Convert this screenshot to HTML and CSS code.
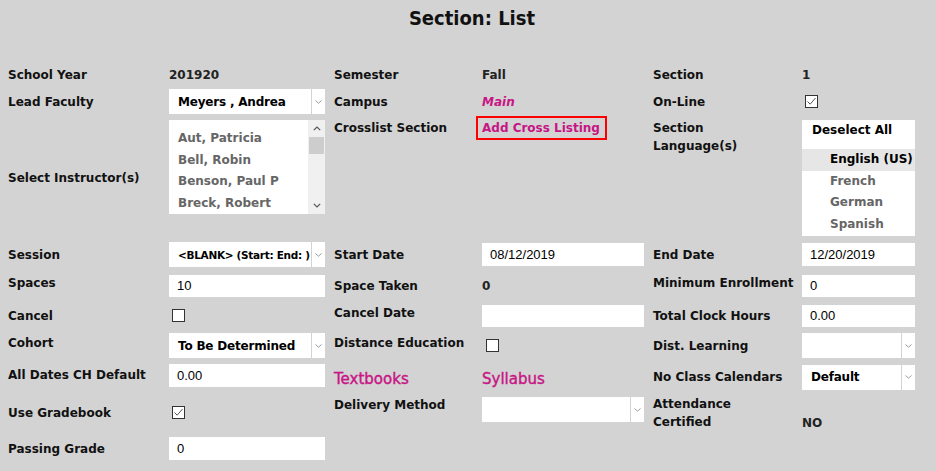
FILE: index.html
```html
<!DOCTYPE html>
<html>
<head>
<meta charset="utf-8">
<title>Section: List</title>
<link rel="stylesheet" href="styles.css">
</head>
<body>
<div class="page">
  <header class="title-bar"><h1 class="title">Section: List</h1></header>
  <div class="form">
    <!-- Row 1 -->
    <div class="lbl">School Year</div>
    <div class="val">201920</div>
    <div class="lbl mid">Semester</div>
    <div class="val">Fall</div>
    <div class="lbl mid">Section</div>
    <div class="val">1</div>

    <!-- Row 2 -->
    <div class="lbl">Lead Faculty</div>
    <div class="select"><span class="sel-text">Meyers , Andrea</span><span class="sel-btn"><svg width="7" height="4" viewBox="0 0 7 4"><path d="M0.5 0.5 L3.5 3.2 L6.5 0.5" fill="none" stroke="#9a9a9a" stroke-width="1"/></svg></span></div>
    <div class="lbl mid">Campus</div>
    <div class="val link italic">Main</div>
    <div class="lbl mid">On-Line</div>
    <div class="cell-check"><span class="check on"><svg width="11" height="11" viewBox="0 0 11 11"><path d="M1.5 5.5 L4.2 8.2 L9.5 2" fill="none" stroke="#555" stroke-width="1"/></svg></span></div>

    <!-- Row 3 -->
    <div class="lbl">Select Instructor(s)</div>
    <div class="listbox">
      <div class="list-items">
        <div class="item">Aut, Patricia</div>
        <div class="item">Bell, Robin</div>
        <div class="item">Benson, Paul P</div>
        <div class="item">Breck, Robert</div>
      </div>
      <div class="scrollbar">
        <span class="sb-arrow"><svg width="8" height="5" viewBox="0 0 8 5"><path d="M0.8 4.2 L4 1 L7.2 4.2" fill="none" stroke="#555" stroke-width="1.2"/></svg></span>
        <span class="sb-thumb"></span>
        <span class="sb-fill"></span>
        <span class="sb-arrow"><svg width="8" height="5" viewBox="0 0 8 5"><path d="M0.8 0.8 L4 4 L7.2 0.8" fill="none" stroke="#555" stroke-width="1.2"/></svg></span>
      </div>
    </div>
    <div class="lbl mid top">Crosslist Section</div>
    <div class="top-cell"><a class="cross-link" href="#">Add Cross Listing</a></div>
    <div class="lbl mid top two">Section<br>Language(s)</div>
    <div class="langbox">
      <div class="deselect">Deselect All</div>
      <div class="lang selected">English (US)</div>
      <div class="lang">French</div>
      <div class="lang">German</div>
      <div class="lang">Spanish</div>
    </div>

    <!-- Row 4 -->
    <div class="lbl">Session</div>
    <div class="select"><span class="sel-text tight">&lt;BLANK&gt; (Start: End: )</span><span class="sel-btn"><svg width="7" height="4" viewBox="0 0 7 4"><path d="M0.5 0.5 L3.5 3.2 L6.5 0.5" fill="none" stroke="#9a9a9a" stroke-width="1"/></svg></span></div>
    <div class="lbl mid">Start Date</div>
    <input class="field" type="text" value="08/12/2019">
    <div class="lbl mid">End Date</div>
    <input class="field" type="text" value="12/20/2019">

    <!-- Row 5 -->
    <div class="lbl up">Spaces</div>
    <input class="field short" type="text" value="10">
    <div class="lbl mid">Space Taken</div>
    <div class="val">0</div>
    <div class="lbl mid up">Minimum Enrollment</div>
    <input class="field short" type="text" value="0">

    <!-- Row 6 -->
    <div class="lbl">Cancel</div>
    <div class="cell-check"><span class="check"></span></div>
    <div class="lbl mid up">Cancel Date</div>
    <input class="field short" type="text" value="">
    <div class="lbl mid">Total Clock Hours</div>
    <input class="field short" type="text" value="0.00">

    <!-- Row 7 -->
    <div class="lbl up">Cohort</div>
    <div class="select"><span class="sel-text">To Be Determined</span><span class="sel-btn"><svg width="7" height="4" viewBox="0 0 7 4"><path d="M0.5 0.5 L3.5 3.2 L6.5 0.5" fill="none" stroke="#9a9a9a" stroke-width="1"/></svg></span></div>
    <div class="lbl mid up">Distance Education</div>
    <div class="cell-check"><span class="check de"></span></div>
    <div class="lbl mid">Dist. Learning</div>
    <div class="select"><span class="sel-text"></span><span class="sel-btn"><svg width="7" height="4" viewBox="0 0 7 4"><path d="M0.5 0.5 L3.5 3.2 L6.5 0.5" fill="none" stroke="#9a9a9a" stroke-width="1"/></svg></span></div>

    <!-- Row 8 -->
    <div class="lbl up">All Dates CH Default</div>
    <input class="field early" type="text" value="0.00">
    <div class="lbl mid big link">Textbooks</div>
    <div class="val big link">Syllabus</div>
    <div class="lbl mid">No Class Calendars</div>
    <div class="select"><span class="sel-text">Default</span><span class="sel-btn"><svg width="7" height="4" viewBox="0 0 7 4"><path d="M0.5 0.5 L3.5 3.2 L6.5 0.5" fill="none" stroke="#9a9a9a" stroke-width="1"/></svg></span></div>

    <!-- Row 9 -->
    <div class="lbl">Use Gradebook</div>
    <div class="cell-check"><span class="check on"><svg width="11" height="11" viewBox="0 0 11 11"><path d="M1.5 5.5 L4.2 8.2 L9.5 2" fill="none" stroke="#555" stroke-width="1"/></svg></span></div>
    <div class="lbl mid top dm">Delivery Method</div>
    <div class="select top dm-sel"><span class="sel-text"></span><span class="sel-btn"><svg width="7" height="4" viewBox="0 0 7 4"><path d="M0.5 0.5 L3.5 3.2 L6.5 0.5" fill="none" stroke="#9a9a9a" stroke-width="1"/></svg></span></div>
    <div class="lbl mid two">Attendance<br>Certified</div>
    <div class="val bottom">NO</div>

    <!-- Row 10 -->
    <div class="lbl">Passing Grade</div>
    <input class="field" type="text" value="0">
    <div></div><div></div><div></div><div></div>
  </div>
</div>
</body>
</html>
```
FILE: styles.css
```css
html, body {
  margin: 0;
  padding: 0;
  background: #d3d3d3;
}
.page {
  width: 936px;
  height: 471px;
  padding: 0 8px;
  box-sizing: border-box;
  font-family: "DejaVu Sans", "Noto Sans", sans-serif;
  font-size: 12px;
  font-weight: bold;
  color: #111;
  overflow: hidden;
}
.title-bar {
  height: 62px;
  display: flex;
  justify-content: center;
  padding-top: 6px;
  box-sizing: border-box;
}
.title {
  margin: 0;
  font-family: "Liberation Sans Narrow", "DejaVu Sans Condensed", sans-serif;
  font-size: 20px;
  line-height: 24px;
  font-weight: bold;
  color: #111;
  padding-left: 8px;
}
.form {
  display: grid;
  grid-template-columns: 161px 156px 157px 162px 158px 113px;
  grid-template-rows: 25px 29px 123px 31px 31px 29px 31px 32px 39px 33px;
  align-items: center;
}
.lbl {
  line-height: 16px;
  white-space: nowrap;
}
.lbl.mid {
  padding-left: 9px;
}
.lbl.up {
  margin-bottom: 5px;
}
.lbl.top {
  align-self: start;
  margin-top: 4px;
}
.lbl.two {
  line-height: 18px;
}
.lbl.top.two {
  margin-top: 3px;
}
.lbl.dm {
  margin-top: 4px;
}
.val {
  line-height: 16px;
  color: #222;
  white-space: nowrap;
}
.val.bottom {
  align-self: end;
  margin-bottom: 1px;
}
.link {
  color: #c71585;
}
.italic {
  font-style: italic;
}
.big {
  font-size: 15px;
  font-weight: normal;
  line-height: 18px;
  margin-top: 3px;
  -webkit-text-stroke: 0.4px #c71585;
}
.top-cell {
  align-self: start;
}
.cross-link {
  display: inline-block;
  margin-left: -6px;
  height: 24px;
  box-sizing: border-box;
  border: 2px solid #ff0000;
  padding: 0 5px 0 4px;
  line-height: 20px;
  color: #c71585;
  text-decoration: none;
  white-space: nowrap;
}

/* select-like box */
.select {
  height: 25px;
  background: #fff;
  display: flex;
  align-items: center;
  overflow: hidden;
}
.select.top {
  align-self: start;
}
.dm-sel {
  margin-top: 4px;
}
.sel-text {
  flex: 1;
  padding-left: 9px;
  color: #000;
  white-space: nowrap;
  overflow: hidden;
  letter-spacing: -0.2px;
}
.sel-text.tight {
  font-size: 10.5px;
  letter-spacing: -0.3px;
}
.sel-btn {
  width: 13px;
  height: 100%;
  border-left: 1px solid #d3d3d3;
  display: flex;
  align-items: center;
  justify-content: center;
  flex: none;
}

/* text input */
.field {
  height: 23px;
  margin: 0;
  border: 0;
  padding: 0 8px;
  background: #fff;
  box-sizing: border-box;
  width: 100%;
  font-family: "Liberation Sans", Arial, sans-serif;
  font-size: 13px;
  color: #000;
  outline: none;
}
.field.short {
  height: 22px;
}
.field.early {
  align-self: start;
  margin-top: 3px;
}

/* checkbox */
.cell-check {
  display: flex;
  align-items: center;
  padding-left: 3px;
}
.check {
  width: 13px;
  height: 13px;
  box-sizing: border-box;
  border: 1px solid #333;
  background: #fff;
  display: flex;
  align-items: center;
  justify-content: center;
}
.check.de {
  margin-left: 1px;
}

/* listbox with scrollbar */
.listbox {
  align-self: start;
  margin-top: 4px;
  height: 94px;
  background: #fff;
  display: flex;
  overflow: hidden;
}
.list-items {
  flex: 1;
  padding-top: 8px;
}
.item {
  height: 21.5px;
  line-height: 21.5px;
  padding-left: 9px;
  color: #666;
  white-space: nowrap;
}
.scrollbar {
  width: 17px;
  background: #f0f0f0;
  display: flex;
  flex-direction: column;
  align-items: center;
}
.sb-arrow {
  height: 17px;
  width: 100%;
  display: flex;
  align-items: center;
  justify-content: center;
  flex: none;
}
.sb-thumb {
  width: 15px;
  height: 17px;
  background: #cdcdcd;
  flex: none;
}
.sb-fill {
  flex: 1;
}

/* language list */
.langbox {
  align-self: start;
  margin-top: 4px;
  height: 116px;
  background: #fff;
  overflow: hidden;
}
.deselect {
  height: 20px;
  line-height: 20px;
  padding-left: 10px;
  margin-bottom: 9px;
  color: #000;
}
.lang {
  height: 21.5px;
  line-height: 21.5px;
  padding-left: 28px;
  color: #666;
}
.lang.selected {
  background: #e6e6e6;
  color: #000;
}
```
